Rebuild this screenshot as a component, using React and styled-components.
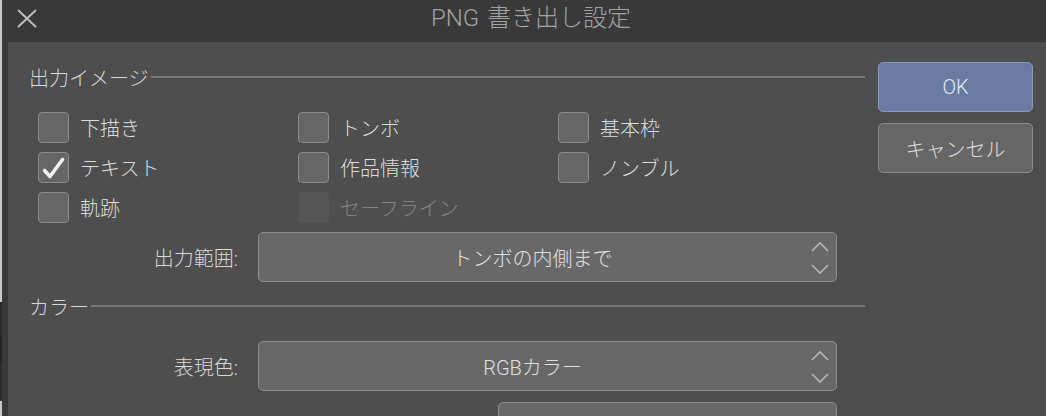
import React from "react";
import styled, { createGlobalStyle } from "styled-components";

const Global = createGlobalStyle`
  html, body { margin: 0; padding: 0; background: #393939; }
  body { width: 1046px; height: 416px; overflow: hidden;
    font-family: Roboto, "Noto Sans CJK JP", "Noto Sans", sans-serif; font-weight: 300; }
  * { box-sizing: border-box; }
`;

const Screen = styled.div`
  display: flex;
  width: 1046px;
  height: 416px;
  overflow: hidden;
`;

const BackStrip = styled.div`
  width: 2px;
  flex: none;
  background: linear-gradient(
    to bottom,
    #c8c8c8 0px, #c8c8c8 302px,
    #2b2b2b 302px, #2b2b2b 336px,
    #222 336px, #222 362px,
    #2b2b2b 362px, #2b2b2b 401px,
    #c8c8c8 401px
  );
`;

const Window = styled.div`
  flex: 1;
  display: flex;
  flex-direction: column;
  background: #393939;
`;

const TitleBar = styled.div`
  position: relative;
  height: 42px;
  flex: none;
  display: flex;
  justify-content: center;
  padding-top: 3px;
`;

const Title = styled.div`
  font-size: 24px;
  line-height: 30px;
  color: #a3a3a3;
  padding-left: 14px;
  word-spacing: 2px;
`;

const CloseBtn = styled.div`
  position: absolute;
  left: 13px;
  top: 8px;
  width: 22px;
  height: 22px;
`;

const Body = styled.div`
  flex: 1;
  margin-left: 6px;
  background: #4e4e4e;
  display: flex;
  gap: 13px;
`;

const Main = styled.div`
  width: 857px;
  flex: none;
  display: flex;
  flex-direction: column;
  padding-left: 21px;
`;

const SectionHead = styled.div`
  display: flex;
  align-items: center;
  height: 24px;
  margin-top: ${(p) => p.$mt}px;
  font-size: 20px;
  color: #d8d8d8;
  &::after {
    content: "";
    flex: 1;
    height: 2px;
    background: #787878;
    margin-left: 2px;
  }
`;

const CheckGrid = styled.div`
  display: grid;
  grid-template-columns: repeat(3, 260px);
  grid-auto-rows: 31px;
  row-gap: 9px;
  margin-top: 23px;
  margin-left: 9px;
`;

const CheckItem = styled.div`
  display: flex;
  align-items: center;
  gap: 11px;
  font-size: 20px;
  color: ${(p) => (p.$disabled ? "#838383" : "#dcdcdc")};
`;

const Box = styled.div`
  position: relative;
  width: 31px;
  height: 31px;
  flex: none;
  border-radius: 4px;
  background: ${(p) => (p.$disabled ? "#555555" : "#666666")};
  border: 1px solid ${(p) => (p.$disabled ? "#555555" : "#8a8a8a")};
`;

const CheckMark = styled.svg`
  position: absolute;
  left: -1px;
  top: -1px;
`;

const FieldRow = styled.div`
  display: flex;
  align-items: center;
  gap: 20px;
  margin-top: ${(p) => p.$mt}px;
`;

const FieldLabel = styled.div`
  width: 209px;
  text-align: right;
  font-size: 20px;
  color: #d8d8d8;
`;

const Select = styled.div`
  position: relative;
  width: ${(p) => p.$w || 579}px;
  height: 50px;
  flex: none;
  background: #686868;
  border: 1px solid #8c8c8c;
  border-radius: 5px;
  display: flex;
  align-items: center;
  justify-content: center;
  padding-right: 30px;
  font-size: 20px;
  color: #e0e0e0;
`;

const Chevrons = styled.svg`
  position: absolute;
  right: 6px;
  top: 8px;
`;

const PartialRow = styled.div`
  margin-top: 11px;
  padding-left: 469px;
`;

const Side = styled.div`
  display: flex;
  flex-direction: column;
  gap: 11px;
  padding-top: 20px;
`;

const Button = styled.div`
  width: 155px;
  height: 50px;
  border-radius: 5px;
  display: flex;
  align-items: center;
  justify-content: center;
  font-size: 20px;
  background: ${(p) => (p.$primary ? "#6a7ba1" : "#666666")};
  border: 1px solid ${(p) => (p.$primary ? "#8797bb" : "#8a8a8a")};
  color: ${(p) => (p.$primary ? "#e3ebf5" : "#dcdcdc")};
`;

const CheckBox = ({ label, checked, disabled }) => (
  <CheckItem $disabled={disabled}>
    <Box $disabled={disabled}>
      {checked && (
        <CheckMark width="31" height="31" viewBox="0 0 31 31">
          <path d="M6.5 18.5 L12 24.5 L24.5 7.5" fill="none" stroke="#f0f0f0" strokeWidth="3.6" strokeLinecap="round" strokeLinejoin="round" />
        </CheckMark>
      )}
    </Box>
    {label}
  </CheckItem>
);

const UpDown = () => (
  <Chevrons width="20" height="34" viewBox="0 0 20 34">
    <path d="M2 10 L10 2 L18 10" fill="none" stroke="#b4b4b4" strokeWidth="1.6" />
    <path d="M2 24 L10 32 L18 24" fill="none" stroke="#b4b4b4" strokeWidth="1.6" />
  </Chevrons>
);

export default function App() {
  return (
    <Screen>
      <Global />
      <BackStrip />
      <Window>
        <TitleBar>
          <CloseBtn>
            <svg width="22" height="22" viewBox="0 0 22 22">
              <path d="M3 2 L21 19 M21 2 L3 19" stroke="#bdbdbd" strokeWidth="2" fill="none" />
            </svg>
          </CloseBtn>
          <Title>PNG 書き出し設定</Title>
        </TitleBar>
        <Body>
          <Main>
            <SectionHead $mt={23}>出力イメージ</SectionHead>
            <CheckGrid>
              <CheckBox label="下描き" />
              <CheckBox label="トンボ" />
              <CheckBox label="基本枠" />
              <CheckBox label="テキスト" checked />
              <CheckBox label="作品情報" />
              <CheckBox label="ノンブル" />
              <CheckBox label="軌跡" />
              <CheckBox label="セーフライン" disabled />
            </CheckGrid>
            <FieldRow $mt={9}>
              <FieldLabel>出力範囲:</FieldLabel>
              <Select>
                トンボの内側まで
                <UpDown />
              </Select>
            </FieldRow>
            <SectionHead $mt={12}>カラー</SectionHead>
            <FieldRow $mt={23}>
              <FieldLabel>表現色:</FieldLabel>
              <Select>
                RGBカラー
                <UpDown />
              </Select>
            </FieldRow>
            <PartialRow>
              <Select $w={339} />
            </PartialRow>
          </Main>
          <Side>
            <Button $primary>OK</Button>
            <Button>キャンセル</Button>
          </Side>
        </Body>
      </Window>
    </Screen>
  );
}
